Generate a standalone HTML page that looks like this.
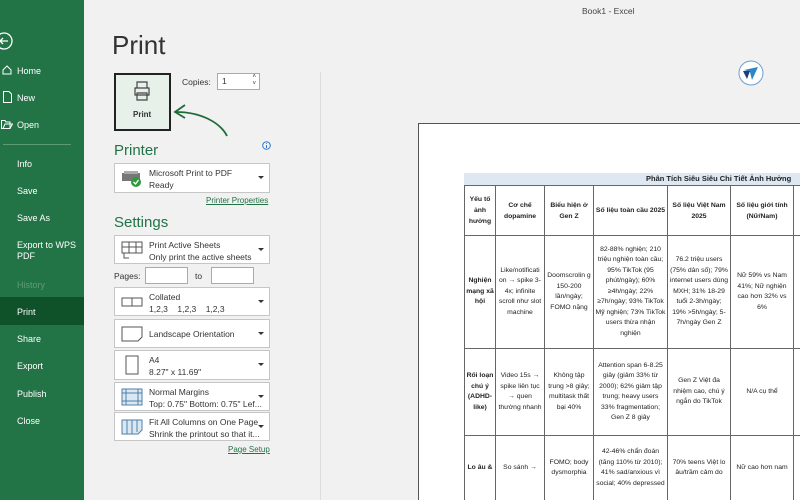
<!DOCTYPE html>
<html style="overflow:hidden;width:800px;height:500px"><head><meta charset="utf-8"><style>
*{margin:0;padding:0;box-sizing:border-box}
body{width:800px;height:500px;overflow:hidden;background:#f1f1f1;font-family:"Liberation Sans",sans-serif;position:relative;color:#333}
.a{position:absolute}
#side{left:0;top:0;width:84px;height:500px;background:#227447;color:#fff;font-size:9px}
#side .i{position:absolute;left:17px}
.dd{position:absolute;left:114px;width:156px;background:#fff;border:1px solid #c6c6c6;font-size:8.5px;color:#333}
.dd .t{position:absolute;left:34px;line-height:12px}
.dd .c{position:absolute;right:5px;top:50%;margin-top:-2px;border:3px solid transparent;border-top:3px solid #333;border-bottom:0}
.dd svg{position:absolute;left:6px;top:50%;transform:translateY(-50%)}
#clip{left:0;top:0;width:800px;height:500px;overflow:hidden}
.pg{left:418px;top:123px;width:382px;height:377px;background:#fff;border:1px solid #555;border-right:0;border-bottom:0}
table{position:absolute;left:464px;top:185px;border-collapse:collapse;table-layout:fixed;width:336px;font-size:6.8px;color:#222;text-align:center;background:#fff}
td{border:1px solid #666;padding:1px 1px;line-height:10.5px;vertical-align:middle;overflow:hidden;word-wrap:break-word}
th{border:1px solid #666;font-weight:bold;padding:1px 1px;line-height:11px}
</style></head><body>
<div id="side" class="a">
<svg class="a" style="left:-6px;top:31px" width="20" height="20" viewBox="0 0 20 20"><circle cx="10" cy="10" r="8" fill="none" stroke="#fff" stroke-width="1.3"/><path d="M14 10H6M9 7L6 10L9 13" fill="none" stroke="#fff" stroke-width="1.3"/></svg>
<svg class="a" style="left:2px;top:65px" width="10" height="10" viewBox="0 0 10 10"><path d="M1 5L5 1L9 5V9H1Z" fill="none" stroke="#fff"/></svg>
<div class="i" style="top:66px">Home</div>
<svg class="a" style="left:3px;top:91px" width="9" height="12" viewBox="0 0 9 12"><path d="M.5 .5H6L8.5 3V11.5H.5Z" fill="none" stroke="#fff"/></svg>
<div class="i" style="top:93px">New</div>
<svg class="a" style="left:1px;top:120px" width="12" height="9" viewBox="0 0 12 9"><path d="M.5 .5H4L5 2H9V8.5H.5ZM2 8.5L4 4H11.5L9 8.5" fill="none" stroke="#fff"/></svg>
<div class="i" style="top:120px">Open</div>
<div class="a" style="left:3px;top:144px;width:68px;height:1px;background:#5c9a77"></div>
<div class="i" style="top:159px">Info</div>
<div class="i" style="top:186px">Save</div>
<div class="i" style="top:213px">Save As</div>
<div class="i" style="top:240px;line-height:11px">Export to WPS<br>PDF</div>
<div class="i" style="top:280px;color:#5f9a78">History</div>
<div class="a" style="left:0;top:297px;width:84px;height:28px;background:#0f5229"></div>
<div class="i" style="top:307px">Print</div>
<div class="i" style="top:334px">Share</div>
<div class="i" style="top:361px">Export</div>
<div class="i" style="top:389px">Publish</div>
<div class="i" style="top:416px">Close</div>
</div>
<div class="a" style="left:582px;top:6px;font-size:8.5px;color:#444">Book1 - Excel</div>
<div class="a" style="left:112px;top:30px;font-size:26px;color:#333;font-weight:300">Print</div>
<div class="a" style="left:114px;top:73px;width:57px;height:58px;background:#e7f1ea;border:2px solid #222"></div>
<svg class="a" style="left:131px;top:80px" width="22" height="22" viewBox="0 0 22 22"><path d="M6 8V2H16V8M4 8H18V15H4ZM6 13H16V20H6Z" fill="#e7f1ea" stroke="#444" stroke-width="1.2"/></svg>
<div class="a" style="left:133px;top:110px;font-size:8px;font-weight:bold;color:#333">Print</div>
<svg class="a" style="left:170px;top:100px" width="60" height="40" viewBox="0 0 60 40"><path d="M57 36C50 22 30 12 6 12" fill="none" stroke="#1f6b3a" stroke-width="1.8"/><path d="M15 5L5 12L15 18" fill="none" stroke="#1f6b3a" stroke-width="1.8"/></svg>
<div class="a" style="left:182px;top:77px;font-size:8.5px">Copies:</div>
<div class="a" style="left:217px;top:73px;width:43px;height:17px;background:#fff;border:1px solid #aaa;font-size:8.5px;padding:2px 4px">1<span style="position:absolute;right:3px;top:0;font-size:6px;line-height:7px">˄<br>˅</span></div>
<div class="a" style="left:114px;top:142px;font-size:15px;color:#217346">Printer</div>
<svg class="a" style="left:262px;top:141px" width="9" height="9" viewBox="0 0 9 9"><circle cx="4.5" cy="4.5" r="3.8" fill="none" stroke="#2a77c9"/><path d="M4.5 4V7M4.5 2.2V3" stroke="#2a77c9"/></svg>
<div class="dd" style="top:163px;height:30px"><svg width="22" height="20" viewBox="0 0 22 20"><rect x="1" y="5" width="18" height="8" fill="#777"/><rect x="3" y="3" width="14" height="3" fill="#aaa"/><circle cx="15" cy="14" r="5" fill="#2e9a3e"/><path d="M12.5 14L14.5 16L17.5 12" stroke="#fff" fill="none" stroke-width="1.3"/></svg><div class="t" style="top:3px">Microsoft Print to PDF<br>Ready</div><div class="c"></div></div>
<div class="a" style="left:206px;top:196px;font-size:8px;color:#217346;text-decoration:underline">Printer Properties</div>
<div class="a" style="left:114px;top:214px;font-size:15px;color:#217346">Settings</div>
<div class="dd" style="top:235px;height:29px"><svg width="22" height="18" viewBox="0 0 22 18"><path d="M1 1H21V12H1ZM1 6H21M8 1V12M15 1V12M3 12V17H8" fill="none" stroke="#555"/></svg><div class="t" style="top:3px">Print Active Sheets<br>Only print the active sheets</div><div class="c"></div></div>
<div class="a" style="left:114px;top:271px;font-size:8.5px">Pages:</div>
<div class="a" style="left:145px;top:267px;width:43px;height:17px;background:#fff;border:1px solid #aaa"></div>
<div class="a" style="left:195px;top:271px;font-size:8.5px">to</div>
<div class="a" style="left:211px;top:267px;width:43px;height:17px;background:#fff;border:1px solid #aaa"></div>
<div class="dd" style="top:287px;height:29px"><svg width="22" height="10" viewBox="0 0 22 10"><path d="M1 1H21V9H1ZM11 1V9" fill="none" stroke="#555"/></svg><div class="t" style="top:3px">Collated<br>1,2,3 &nbsp;&nbsp; 1,2,3 &nbsp;&nbsp; 1,2,3</div><div class="c"></div></div>
<div class="dd" style="top:319px;height:29px"><svg width="22" height="16" viewBox="0 0 22 16"><path d="M1 1H21V11L17 15H1Z" fill="none" stroke="#555"/></svg><div class="t" style="top:8px">Landscape Orientation</div><div class="c"></div></div>
<div class="dd" style="top:350px;height:30px"><svg width="22" height="20" viewBox="0 0 22 20"><path d="M5 1H17V19H5Z" fill="none" stroke="#555"/></svg><div class="t" style="top:3px">A4<br>8.27" x 11.69"</div><div class="c"></div></div>
<div class="dd" style="top:382px;height:29px"><svg width="22" height="18" viewBox="0 0 22 18"><path d="M1 1H21V17H1ZM1 5H21M1 13H21M5 1V17M17 1V17" fill="#dbe8f2" stroke="#4f7fa8"/></svg><div class="t" style="top:3px">Normal Margins<br>Top: 0.75" Bottom: 0.75" Lef...</div><div class="c"></div></div>
<div class="dd" style="top:412px;height:29px"><svg width="22" height="16" viewBox="0 0 22 16"><path d="M1 1H21V11L17 15H1ZM6 1V15M11 1V15M16 1V13" fill="#dbe8f2" stroke="#4f7fa8"/></svg><div class="t" style="top:3px">Fit All Columns on One Page<br>Shrink the printout so that it...</div><div class="c"></div></div>
<div class="a" style="left:228px;top:445px;font-size:8px;color:#217346;text-decoration:underline">Page Setup</div>
<div class="a" style="left:320px;top:72px;width:1px;height:428px;background:#ddd"></div>
<svg class="a" style="left:738px;top:60px" width="26" height="26" viewBox="0 0 26 26"><circle cx="13" cy="13" r="12" fill="#fff" stroke="#6aa0cf"/><path d="M6 10L20 7L14 20L12 12Z" fill="#2c86c8"/><path d="M5 11H12L9 19Z" fill="#1c3f77"/></svg>
<div id="clip" class="a">
<div class="a pg"></div>
<div class="a" style="left:464px;top:173px;width:336px;height:12px;background:#dde8f3;font-size:7.5px;font-weight:bold;line-height:12px;padding-left:182px;white-space:nowrap;overflow:hidden;color:#222">Phân Tích Siêu Siêu Chi Tiết Ảnh Hưởng</div>
<table>
<colgroup><col style="width:31px"><col style="width:49px"><col style="width:49px"><col style="width:74px"><col style="width:63px"><col style="width:63px"><col style="width:7px"></colgroup>
<tr style="height:50px"><th>Yếu tố ảnh hưởng</th><th>Cơ chế dopamine</th><th>Biểu hiện ở Gen Z</th><th>Số liệu toàn cầu 2025</th><th>Số liệu Việt Nam 2025</th><th>Số liệu giới tính (Nữ/Nam)</th><th></th></tr>
<tr style="height:113px"><td><b>Nghiện mạng xã hội</b></td><td>Like/notificati on → spike 3-4x; infinite scroll như slot machine</td><td>Doomscrolin g 150-200 lần/ngày; FOMO nặng</td><td>82-88% nghiện; 210 triệu nghiện toàn cầu; 95% TikTok (95 phút/ngày); 60% ≥4h/ngày; 22% ≥7h/ngày; 93% TikTok Mỹ nghiện; 73% TikTok users thừa nhận nghiện</td><td>76.2 triệu users (75% dân số); 79% internet users dùng MXH; 31% 18-29 tuổi 2-3h/ngày; 19% >5h/ngày; 5-7h/ngày Gen Z</td><td>Nữ 59% vs Nam 41%; Nữ nghiện cao hơn 32% vs 6%</td><td></td></tr>
<tr style="height:87px"><td><b>Rối loạn chú ý (ADHD-like)</b></td><td>Video 15s → spike liên tục → quen thường nhanh</td><td>Không tập trung >8 giây; multitask thất bại 40%</td><td>Attention span 6-8.25 giây (giảm 33% từ 2000); 62% giảm tập trung; heavy users 33% fragmentation; Gen Z 8 giây</td><td>Gen Z Việt đa nhiệm cao, chú ý ngắn do TikTok</td><td>N/A cụ thể</td><td></td></tr>
<tr style="height:65px"><td><b>Lo âu &amp;</b></td><td>So sánh →</td><td>FOMO; body dysmorphia</td><td>42-46% chẩn đoán (tăng 110% từ 2010); 41% sad/anxious vì social; 40% depressed</td><td>70% teens Việt lo âu/trầm cảm do</td><td>Nữ cao hơn nam</td><td></td></tr>
</table>
</div>
</body></html>
